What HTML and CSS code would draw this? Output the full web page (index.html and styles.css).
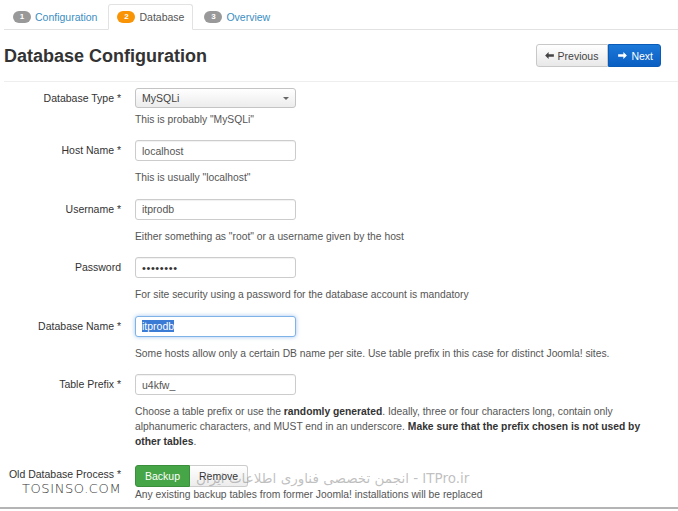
FILE: index.html
```html
<!DOCTYPE html>
<html lang="en">
<head>
    <meta charset="UTF-8">
    <meta name="viewport" content="width=device-width, initial-scale=1.0">
    <title>Joomla! Installation - Database</title>
    <link rel="stylesheet" href="styles.css">
</head>
<body>
    <div class="page">
        <!-- Install steps -->
        <ul class="steps">
            <li class="step"><span class="badge">1</span><a href="#">Configuration</a></li>
            <li class="step active"><span class="badge badge-warning">2</span>Database</li>
            <li class="step"><span class="badge">3</span><a href="#">Overview</a></li>
        </ul>

        <div class="title-bar">
            <h1>Database Configuration</h1>
            <div class="btn-group">
                <button type="button" class="btn">
                    <svg class="arrow" viewBox="0 0 10 8"><path d="M0 4 L4 0 L4 2.5 L10 2.5 L10 5.5 L4 5.5 L4 8 Z"/></svg>Previous
                </button>
                <button type="button" class="btn btn-primary">
                    <svg class="arrow" viewBox="0 0 10 8"><path d="M10 4 L6 0 L6 2.5 L0 2.5 L0 5.5 L6 5.5 L6 8 Z"/></svg>Next
                </button>
            </div>
        </div>

        <form class="form" onsubmit="return false">
            <div class="row">
                <label for="db-type">Database Type *</label>
                <div class="controls">
                    <div class="select" id="db-type">MySQLi<span class="caret"></span></div>
                    <p class="help help-tight">This is probably "MySQLi"</p>
                </div>
            </div>

            <div class="row">
                <label for="db-host">Host Name *</label>
                <div class="controls">
                    <input type="text" id="db-host" value="localhost">
                    <p class="help">This is usually "localhost"</p>
                </div>
            </div>

            <div class="row">
                <label for="db-user">Username *</label>
                <div class="controls">
                    <input type="text" id="db-user" value="itprodb">
                    <p class="help">Either something as "root" or a username given by the host</p>
                </div>
            </div>

            <div class="row">
                <label for="db-pass">Password</label>
                <div class="controls">
                    <input type="password" id="db-pass" value="itprodb1">
                    <p class="help">For site security using a password for the database account is mandatory</p>
                </div>
            </div>

            <div class="row">
                <label for="db-name">Database Name *</label>
                <div class="controls">
                    <div class="field focused" id="db-name"><span class="selected">itprodb</span></div>
                    <p class="help">Some hosts allow only a certain DB name per site. Use table prefix in this case for distinct Joomla! sites.</p>
                </div>
            </div>

            <div class="row">
                <label for="db-prefix">Table Prefix *</label>
                <div class="controls">
                    <input type="text" id="db-prefix" value="u4kfw_">
                    <p class="help">Choose a table prefix or use the <b>randomly generated</b>. Ideally, three or four characters long, contain only alphanumeric characters, and MUST end in an underscore. <b>Make sure that the prefix chosen is not used by other tables</b>.</p>
                </div>
            </div>

            <div class="row row-last">
                <label>Old Database Process *</label>
                <div class="controls">
                    <div class="toggle">
                        <button type="button" class="toggle-btn on">Backup</button>
                        <button type="button" class="toggle-btn">Remove</button>
                    </div>
                    <p class="help help-flush">Any existing backup tables from former Joomla! installations will be replaced</p>
                </div>
            </div>
        </form>

        <!-- watermarks over the screenshot -->
        <div class="mark-site">TOSINSO.COM</div>
        <div class="mark-forum" dir="rtl">ITPro.ir - انجمن تخصصی فناوری اطلاعات ایران</div>
    </div>
</body>
</html>
```

FILE: styles.css
```css
body {
    margin: 0;
    background: #fff;
    color: #333;
    font-family: "Liberation Sans", Arial, sans-serif;
    font-size: 10.5px;
}

.page {
    position: relative;
    height: 509px;
    padding: 4px 0 0 4px;
    box-sizing: border-box;
    border-bottom: 2px solid #b4b4b4;
    overflow: hidden;
}

/* step tabs */
.steps {
    display: flex;
    margin: 0;
    padding: 0;
    list-style: none;
    border-bottom: 1px solid #e2e2e2;
}

.step {
    display: flex;
    align-items: center;
    height: 24px;
    padding: 0 8px;
    margin-right: 2px;
    margin-bottom: -1px;
    border: 1px solid transparent;
    border-radius: 3px 3px 0 0;
    color: #555;
}

.step a {
    color: #3b8ec2;
    text-decoration: none;
}

.step.active {
    border-color: #e2e2e2;
    border-bottom-color: #fff;
    background: #fff;
}

.badge {
    display: inline-block;
    width: 18px;
    height: 12px;
    line-height: 12px;
    margin-right: 4px;
    border-radius: 7px;
    background: #999;
    color: #fff;
    font-size: 8px;
    font-weight: bold;
    text-align: center;
}

.badge-warning {
    background: #f89406;
}

/* title + nav buttons */
.title-bar {
    display: flex;
    align-items: center;
    justify-content: space-between;
    height: 51px;
    padding-right: 17px;
    border-bottom: 1px solid #eee;
}

h1 {
    margin: 0;
    padding-top: 2px;
    font-size: 18px;
    font-weight: bold;
    color: #333;
}

.btn-group {
    display: flex;
}

.btn {
    display: flex;
    align-items: center;
    height: 23px;
    padding: 0 9px 0 8px;
    border: 1px solid #c8c8c8;
    border-radius: 3px 0 0 3px;
    background: linear-gradient(to bottom, #fff, #e8e8e8);
    color: #444;
    font-family: inherit;
    font-size: 10.5px;
    cursor: pointer;
}

.arrow {
    width: 9px;
    height: 7px;
    margin-right: 4px;
    fill: #444;
}

.btn-primary {
    padding: 0 7px 0 9px;
    border-color: #0a5bb8;
    border-radius: 0 3px 3px 0;
    background: linear-gradient(to bottom, #1c78d8, #0a5fc2);
    color: #fff;
}

.btn-primary .arrow {
    fill: #fff;
}

/* form rows */
.form {
    padding-top: 6px;
}

.row {
    display: grid;
    grid-template-columns: 117px 1fr;
    column-gap: 14px;
    margin-bottom: 13.5px;
}

.row > label {
    height: 21px;
    line-height: 21px;
    text-align: right;
    color: #333;
    white-space: nowrap;
}

.controls {
    max-width: 515px;
}

input[type="text"],
input[type="password"],
.field {
    display: block;
    box-sizing: border-box;
    width: 161px;
    height: 21px;
    margin: 0;
    padding: 0 6px;
    border: 1px solid #ccc;
    border-radius: 3px;
    box-shadow: inset 0 1px 1px rgba(0, 0, 0, 0.06);
    background: #fff;
    color: #555;
    font-family: inherit;
    font-size: 10.5px;
    line-height: 19px;
}

input[type="password"] {
    color: #333;
    font-size: 11px;
    letter-spacing: 0.6px;
}

.field.focused {
    border-color: #7fb2e6;
    box-shadow: 0 0 4px rgba(82, 150, 225, 0.55);
}

.selected {
    background: #3a7bd5;
    color: #fff;
}

.select {
    position: relative;
    box-sizing: border-box;
    width: 161px;
    height: 20px;
    padding: 0 6px;
    border: 1px solid #c4c4c4;
    border-radius: 3px;
    background: linear-gradient(to bottom, #fff, #ececec);
    color: #444;
    line-height: 18px;
}

.caret {
    position: absolute;
    right: 6px;
    top: 8px;
    border-left: 3px solid transparent;
    border-right: 3px solid transparent;
    border-top: 3px solid #666;
}

.help {
    margin: 9px 0 0;
    font-size: 10.3px;
    line-height: 15px;
    color: #555;
}

.help b {
    color: #333;
}

.help-tight {
    margin-top: 3.5px;
}

.help-flush {
    margin-top: 0;
}

.row-last {
    padding-top: 2px;
}

.row-last > label {
    height: 22px;
    line-height: 18px;
}

/* backup / remove switch */
.toggle {
    display: flex;
}

.toggle-btn {
    height: 22px;
    padding: 0 9px;
    border: 1px solid #ccc;
    border-left: 0;
    border-radius: 0 3px 3px 0;
    background: linear-gradient(to bottom, #fff, #ececec);
    color: #333;
    font-family: inherit;
    font-size: 10.5px;
}

.toggle-btn.on {
    border: 1px solid #3b8e3b;
    border-radius: 3px 0 0 3px;
    background: #46a546;
    color: #fff;
}

/* watermarks */
.mark-site {
    position: absolute;
    left: 22px;
    top: 481px;
    color: #333;
    font-family: "DejaVu Sans", sans-serif;
    font-size: 13px;
    font-weight: 200;
    letter-spacing: 0.6px;
}

.mark-forum {
    position: absolute;
    left: 196px;
    top: 470px;
    width: 284px;
    color: rgba(140, 140, 140, 0.55);
    font-family: "DejaVu Sans", sans-serif;
    font-size: 13.5px;
    white-space: nowrap;
    text-align: left;
}
```
